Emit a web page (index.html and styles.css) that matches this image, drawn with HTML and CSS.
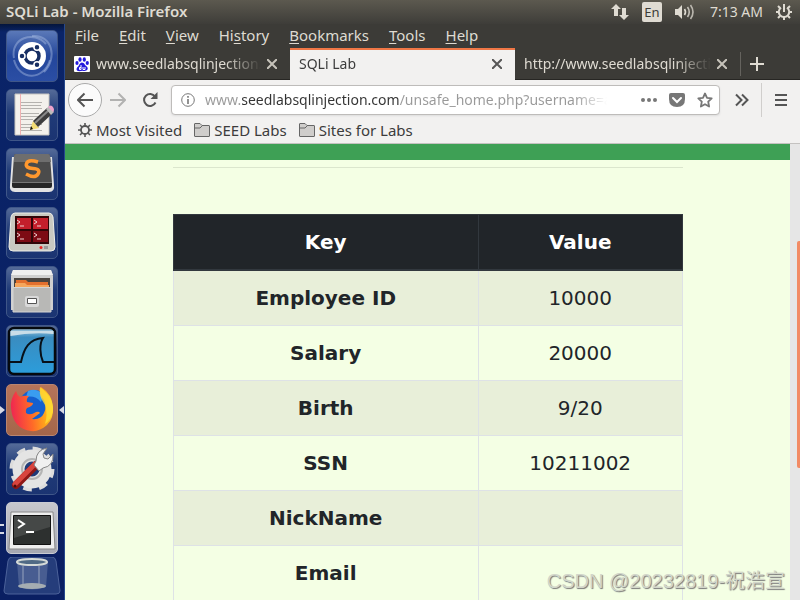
FILE: index.html
```html
<!DOCTYPE html>
<html lang="en">
<head>
<meta charset="utf-8">
<title>SQLi Lab</title>
<link rel="stylesheet" href="styles.css">
</head>
<body>
<header class="panel">
  <h1 class="panel-title">SQLi Lab - Mozilla Firefox</h1>
  <div class="indicators">
    <svg width="18" height="18" viewBox="0 0 18 18" fill="#dfdbd2"><path d="M5 1l5 5H7v7H3V6H0z"/><path d="M13 17l-5-5h3V5h4v7h3z"/></svg>
    <span class="lang">En</span>
    <svg width="20" height="18" viewBox="0 0 20 18" fill="none" stroke="#dfdbd2" stroke-width="1.6"><path d="M0 6h3l4-4v14l-4-4H0z" fill="#dfdbd2" stroke="none"/><path d="M9.500 6q2 3 0 6"/><path d="M12.500 4q3.500 5 0 10" opacity=".8"/><path d="M15.500 2q5 7 0 14" opacity=".75"/></svg>
    <time class="clock">7:13 AM</time>
    <svg width="16" height="16" viewBox="0 0 16 16" fill="none" stroke="#dfdbd2"><path d="M5 3.600a5.200 5.200 0 1 0 6 0" stroke-width="2"/><path d="M8 0v8" stroke-width="2"/><path d="M0 8h3M13 8h3M2 2l2 2M14 2l-2 2M2 14l2-2M14 14l-2-2M8 13v3" stroke-width="2"/></svg>
  </div>
</header>
<div class="desktop">
  <nav class="launcher" aria-label="Launcher">
    <button class="tile dash" aria-label="Dash"><svg viewBox="0 0 52 52"><g fill="none" stroke="#b9cbec" stroke-opacity=".4" stroke-width="2"><path d="M8 28C4 8 28 0 40 14"/><path d="M26 6c20-2 26 22 12 36"/><path d="M44 30C38 50 14 52 8 30"/></g><circle cx="26" cy="26" r="14" fill="#fff"/><circle cx="26" cy="26" r="7" fill="none" stroke="#172e62" stroke-width="3.500"/><g stroke="#fff" stroke-width="1.500" fill="#172e62"><circle cx="16" cy="26" r="3"/><circle cx="31" cy="17.300" r="3"/><circle cx="31" cy="34.700" r="3"/></g></svg></button>
    <button class="tile" aria-label="Text editor"><svg viewBox="0 0 52 52"><path d="M9 5h34v41H9z" fill="#f3f1ec" stroke="#c8c6c0"/><path d="M14.500 5v41" stroke="#efb1b1"/><path d="M15 13.500h21M15 16.500h20M15 19.500h21M15 24.500h18M15 27.500h21M15 30.500h12M15 35.500h21M15 38.500h18M15 41.500h21" stroke="#b4b2ae"/><path d="M24 41l3-9 6 7z" fill="#f2dc73"/><path d="M24 41l1-4 2 3z" fill="#111"/><path d="M27 32l14-13 5 6-14 13z" fill="#3d3d3d"/><path d="M29 34l14-13" stroke="#888" stroke-width="2"/><path d="M40 20l3-3 5 6-3 3z" fill="#bbb"/><path d="M42 18q3-3 5 0t0 5z" fill="#eda2cb"/></svg></button>
    <button class="tile" aria-label="Sublime Text"><svg viewBox="0 0 52 52"><path d="M6 9L4 37q-1 7 5 7h34q6 0 5-7L46 9z" fill="#e2e2e2"/><path d="M10 6h32q2 0 2 2l2 27H6L8 8q0-2 2-2z" fill="#4b4b4b"/><path d="M10 6h32q2 0 2 2l1 6H8V8q0-2 2-2z" fill="#6e6e6e"/><path d="M6 34h40v4q0 2-2 2H8q-2 0-2-2z" fill="#262626"/><path d="M6 34.500h40" stroke="#777"/><path d="M32 14Q22 11 20.500 15.500T27 20.500t5 5.500-12 0" fill="none" stroke="#ff982e" stroke-width="3.500"/></svg></button>
    <button class="tile" aria-label="Terminator"><svg viewBox="0 0 52 52"><path d="M9 6h34q3 0 4 4l2 30q0 4-4 4H7q-4 0-4-4l2-30q1-4 4-4z" fill="#c9c9c1" stroke="#eeeee8"/><path d="M9 9h34v28H9z" fill="#310608"/><path d="M11 11h14v11H11zM27 11h15v11H27z" fill="#c41f2b"/><path d="M11 24h14v11H11zM27 24h15v11H27z" fill="#7d0b14"/><path d="M11 13l3 2-3 2m3 2h4M28 13l3 2-3 2m3 2h4M11 26l3 2-3 2m3 2h4M28 26l3 2-3 2m3 2h4" fill="none" stroke="#eed2d2"/><circle cx="35" cy="40.500" r="1.500" fill="#e22"/><path d="M38 39h4v3h-4z" fill="#999"/></svg></button>
    <button class="tile" aria-label="Files"><svg viewBox="0 0 52 52"><path d="M7 4h38l2 6v34H5V10z" fill="#cfcfcf"/><path d="M7 4h38l2 5H5z" fill="#efefef"/><path d="M8 12h36v12H8z" fill="#4b4540"/><path d="M10 14h10l2 2h20v10H10z" fill="#e3702e"/><path d="M9 17h10l2 2h22v6H9z" fill="#f5a65c"/><path d="M7 21.500h38V46H7z" fill="#b8b8b6" stroke="#d4d4d4"/><rect x="19" y="30" width="14" height="11" rx="2" fill="#d9d9d9"/><path d="M21.500 32.500h9v5h-9z" fill="#fff" stroke="#555"/></svg></button>
    <button class="tile" aria-label="Wireshark"><svg viewBox="0 0 52 52"><defs><linearGradient id="sea" x2="0" y2="1"><stop offset="0" stop-color="#a9cbdf"/><stop offset=".2" stop-color="#3a8cc0"/><stop offset="1" stop-color="#2b9ddb"/></linearGradient></defs><rect x="3" y="3" width="46" height="46" rx="5" fill="url(#sea)" stroke="#05090e" stroke-width="2.500"/><path d="M4.500 6h43v3q-22-2-43 2z" fill="#c9dde8"/><path d="M4 37h11C18 23 23 14 37 13c-4 6-3 17 0 24h11" fill="none" stroke="#071018" stroke-width="2"/></svg></button>
    <button class="tile firefox running focused" aria-label="Firefox"><svg viewBox="0 0 52 52"><defs><linearGradient id="flame" x1="0" y1=".3" x2="1" y2=".2"><stop offset="0" stop-color="#f0294f"/><stop offset=".45" stop-color="#ff6a28"/><stop offset=".8" stop-color="#ffae1a"/><stop offset="1" stop-color="#ffd92e"/></linearGradient></defs><circle cx="28" cy="21" r="15" fill="#1560cf"/><path d="M22 7q10-4 15 5l-2 6q-6-7-15-5z" fill="#3a9df0"/><path d="M5 24Q4 15 10 7q1 4 4 6 4-2 9-1-3 3-2 6l6 1q0 3-6 5-2 2-1 5 4 3 10-1 3-1 4 1-4 3-8 6 9 1 12-6 3-6 0-13-6-7-3-13 11 7 12 20 1 11-6 18-8 7-16 6-18-2-20-23z" fill="url(#flame)"/><path d="M34 3q14 11 13 24-2 9-8 13 3-9 0-19-7-10-5-18z" fill="#ffdc35" opacity=".8"/></svg></button>
    <button class="tile" aria-label="System settings"><svg viewBox="0 0 52 52"><circle cx="26" cy="26" r="19" fill="none" stroke="#dcdcdc" stroke-width="7" stroke-dasharray="8 6.923"/><circle cx="26" cy="26" r="13.500" fill="none" stroke="#e4e4e4" stroke-width="12"/><circle cx="26" cy="26" r="10" fill="none" stroke="#b4b4b4" stroke-width="2"/><path d="M10 42l20-20" stroke="#8f1715" stroke-width="8" stroke-linecap="round"/><path d="M9 41l20-20" stroke="#d8443e" stroke-width="5" stroke-linecap="round"/><path d="M30 18q0-11 11-13l-4 6 1 4 4 1 5-5q1 12-10 14l-4 3-5-6z" fill="#f0f0f0" stroke="#858585"/><circle cx="9" cy="43" r="1.500" fill="#4b0a0a"/></svg></button>
    <button class="tile terminal running" aria-label="Terminal"><svg viewBox="0 0 52 52"><path d="M5 10h42l2 37H3z" fill="#eee" stroke="#888"/><path d="M7.500 13.500h37v29h-37z" fill="#2d302f" stroke="#111"/><path d="M8 14h36v11L8 36z" fill="#454847"/><path d="M12 18l6 4-6 4M20 30h8" fill="none" stroke="#fff" stroke-width="2"/></svg></button>
    <button class="trash" aria-label="Trash"><svg viewBox="0 0 58 38"><path d="M9 0h40q3 0 4 4l4 30q0 3-4 3H5q-4 0-4-3L5 4q1-4 4-4z" fill="#253d7b" stroke="#4c629a"/><path d="M14 5l2 25q13 5 27 0l2-25z" fill="#5a6f9c" opacity=".65"/><ellipse cx="29" cy="29" rx="14" ry="3" fill="#a5adb2"/><ellipse cx="29" cy="5" rx="15" ry="3" fill="#506a85" stroke="#d5dad7" stroke-width="2"/><path d="M20 9v18M36 9v18" stroke="#a9b4c8" opacity=".4" stroke-width="2"/></svg></button>
  </nav>
  <main class="browser">
    <nav class="menubar" aria-label="Menu bar">
      <button><u>F</u>ile</button><button><u>E</u>dit</button><button><u>V</u>iew</button><button>Hi<u>s</u>tory</button><button><u>B</u>ookmarks</button><button><u>T</u>ools</button><button><u>H</u>elp</button>
    </nav>
    <div class="tabs" role="tablist">
      <div class="tab">
        <svg class="favicon" viewBox="0 0 16 16"><rect width="16" height="16" rx="1" fill="#fff"/><g fill="#2319dc"><ellipse cx="3" cy="7" rx="1.600" ry="2"/><ellipse cx="6" cy="3.500" rx="1.600" ry="2.200"/><ellipse cx="10.300" cy="3.500" rx="1.600" ry="2.200"/><ellipse cx="13.300" cy="7" rx="1.600" ry="2"/><path d="M8 6.500q2 0 3.500 3 3 2 2 4t-5 1.300q-4 .8-5.500-.3-1.500-2 1.500-4.500 1.500-3.500 3.500-3.500z"/></g><path d="M7 9v4.500H5.500v-2H7M9 11v2.500h2V11" fill="none" stroke="#fff"/></svg>
        <button class="tab-label" role="tab">www.seedlabsqlinjection.com</button>
        <button class="close" aria-label="Close tab"><svg viewBox="0 0 10 10"><path d="M0 0l10 10M10 0L0 10"/></svg></button>
      </div>
      <div class="tab active">
        <button class="tab-label" role="tab" aria-selected="true">SQLi Lab</button>
        <button class="close" aria-label="Close tab"><svg viewBox="0 0 10 10"><path d="M0 0l10 10M10 0L0 10"/></svg></button>
      </div>
      <div class="tab">
        <button class="tab-label" role="tab">http://www.seedlabsqlinjection.com</button>
        <button class="close" aria-label="Close tab"><svg viewBox="0 0 10 10"><path d="M0 0l10 10M10 0L0 10"/></svg></button>
      </div>
      <button class="new-tab" aria-label="New tab"><svg viewBox="0 0 14 14"><path d="M7 0v14M0 7h14"/></svg></button>
    </div>
    <div class="toolbar">
      <button class="back" aria-label="Back"><svg width="16" height="16" viewBox="0 0 16 16"><path d="M16 8H1M7.500 1.500L1 8l6.500 6.500"/></svg></button>
      <button class="forward" aria-label="Forward"><svg width="16" height="16" viewBox="0 0 16 16"><path d="M0 8h15M8.500 1.500L15 8l-6.500 6.500"/></svg></button>
      <button class="reload" aria-label="Reload"><svg width="16" height="16" viewBox="0 0 16 16"><path d="M13.500 10.500a6 6 0 1 1-.5-6"/><path d="M15.500 0v7h-7z" fill="#555" stroke="none"/></svg></button>
      <div class="urlbar">
        <svg width="14" height="14" viewBox="0 0 14 14"><circle cx="7" cy="7" r="6.300" fill="none" stroke="#777"/><path d="M7 6v5M7 3v1.800" stroke="#777" stroke-width="1.600"/></svg>
        <input class="url" type="text" aria-label="Address" value="www.seedlabsqlinjection.com/unsafe_home.php?username=admin">
        <svg class="dots" width="16" height="4" viewBox="0 0 16 4" fill="#777"><circle cx="2" cy="2" r="2"/><circle cx="8" cy="2" r="2"/><circle cx="14" cy="2" r="2"/></svg>
        <svg width="16" height="14" viewBox="0 0 16 14"><path d="M2 0h12q2 0 2 2v4q0 8-8 8T0 6V2q0-2 2-2z" fill="#777"/><path d="M4 5l4 4 4-4" fill="none" stroke="#fff" stroke-width="2" stroke-linecap="round"/></svg>
        <svg width="16" height="16" viewBox="0 0 16 16"><path d="M8 1.500l2 4.300 4.700.6-3.500 3.300.9 4.800L8 12.200l-4.100 2.300.9-4.800-3.500-3.300 4.700-.6z" fill="none" stroke="#777" stroke-width="1.800" stroke-linejoin="round"/></svg>
      </div>
      <button class="overflow" aria-label="More tools"><svg width="14" height="14" viewBox="0 0 14 14"><path d="M1 1.500L6.500 7 1 12.500M7 1.500L12.500 7 7 12.500"/></svg></button>
      <button class="menu" aria-label="Open menu"><svg width="12" height="12" viewBox="0 0 12 12"><path d="M0 1h12M0 6h12M0 11h12"/></svg></button>
    </div>
    <nav class="bookmarks" aria-label="Bookmarks">
      <a href="#"><svg width="14" height="14" viewBox="0 0 14 14" fill="none" stroke="#555"><circle cx="7" cy="7" r="4" stroke-width="1.800"/><path d="M7 0v3M7 11v3M0 7h3M11 7h3M2 2l2 2M10 10l2 2M12 2l-2 2M4 10l-2 2" stroke-width="1.600"/></svg>Most Visited</a>
      <a href="#"><svg width="16" height="14" viewBox="0 0 16 14"><path d="M.5 13V1q0-.5.500-.5h5l2 2h7q.5 0 .5.500v10q0 .5-.5.500H1q-.5 0-.5-.5z" fill="#cfcdcb" stroke="#666"/><path d="M1 5h5l2-2" fill="none" stroke="#666"/></svg>SEED Labs</a>
      <a href="#"><svg width="16" height="14" viewBox="0 0 16 14"><path d="M.5 13V1q0-.5.500-.5h5l2 2h7q.5 0 .5.500v10q0 .5-.5.500H1q-.5 0-.5-.5z" fill="#cfcdcb" stroke="#666"/><path d="M1 5h5l2-2" fill="none" stroke="#666"/></svg>Sites for Labs</a>
    </nav>
    <div class="viewport">
      <section class="page">
        <div class="site-nav"></div>
        <div class="container">
          <hr>
          <table>
            <thead><tr><th scope="col">Key</th><th scope="col">Value</th></tr></thead>
            <tbody>
              <tr><th scope="row">Employee ID</th><td>10000</td></tr>
              <tr><th scope="row">Salary</th><td>20000</td></tr>
              <tr><th scope="row">Birth</th><td>9/20</td></tr>
              <tr><th scope="row">SSN</th><td>10211002</td></tr>
              <tr><th scope="row">NickName</th><td></td></tr>
              <tr><th scope="row">Email</th><td></td></tr>
            </tbody>
          </table>
        </div>
      </section>
      <div class="scrollbar"><div class="thumb"></div></div>
    </div>
  </main>
</div>
<p class="watermark">CSDN @20232819-祝浩宣</p>
</body>
</html>
```
FILE: styles.css
```css
* { box-sizing: border-box; }
body {
  margin: 0;
  height: 100vh;
  display: flex;
  flex-direction: column;
  overflow: hidden;
  position: relative;
  font: 14px/20px "Noto Sans", sans-serif;
  color: #3c3c3c;
}
button {
  margin: 0;
  padding: 0;
  border: 0;
  background: none;
  font: inherit;
  color: inherit;
}
svg { display: block; flex: none; }

.panel {
  flex: none;
  height: 24px;
  padding: 0 8px 2px 6px;
  display: flex;
  align-items: center;
  justify-content: space-between;
  background: linear-gradient(#5c594f, #3e3d39);
  color: #dfdbd2;
}
.panel-title { margin: 0; font-size: 15px; line-height: 20px; font-weight: 600; }
.indicators { display: flex; align-items: center; gap: 13px; padding-top: 2px; }
.clock { margin: 0 0 0 2px; }
.lang {
  width: 20px;
  border-radius: 2px;
  background: #dfdbd2;
  color: #3c3b37;
  font-size: 13px;
  text-align: center;
}

.desktop { flex: 1; min-height: 0; display: flex; }
.launcher {
  flex: none;
  width: 65px;
  padding-top: 6px;
  display: flex;
  flex-direction: column;
  align-items: center;
  gap: 7px;
  overflow: hidden;
  background: linear-gradient(#04153c, #0a2468 8px, #0a1f62);
  border-right: 1px solid #26488d;
}
.tile {
  position: relative;
  flex: none;
  width: 52px;
  height: 52px;
  border-radius: 5px;
  border: 1px solid #3f5688;
  background: linear-gradient(#546a98, #203b78 45%, #1b3472);
}
.tile svg { width: 52px; height: 52px; margin: -1px; }
.dash { background: linear-gradient(#5b79b8, #23469b 50%, #2b4ea4); }
.firefox { background: linear-gradient(#b6745a, #a4664a); border-color: #b98570; }
.terminal { background: linear-gradient(#c7c8cd, #a6a8b2); border-color: #c9cbd3; }
.running::before, .focused::after {
  content: "";
  position: absolute;
  top: 21px;
  border: 4px solid transparent;
}
.running::before { left: -7px; border-left: 5px solid #d5d9e5; border-right: 0; }
.focused::after { right: -7px; border-right: 5px solid #d5d9e5; border-left: 0; }
.terminal.running::before { height: 6px; width: 4px; border: solid #d5d9e5; border-width: 2px 0; }
.trash { flex: none; margin-top: -4px; width: 58px; }

.browser { flex: 1; min-width: 0; display: flex; flex-direction: column; background: #f2f1f0; }
.menubar {
  flex: none;
  height: 24px;
  padding: 0 10px 2px;
  display: flex;
  align-items: center;
  gap: 20px;
  background: #3c3b37;
  color: #dfdbd2;
  font-size: 15px;
}
.menubar u { text-underline-offset: 2px; text-decoration-thickness: 1px; }
.tabs {
  flex: none;
  height: 32px;
  display: flex;
  background: linear-gradient(#3c3b37 31px, #272623 31px);
  color: #dfdbd2;
}
.tab {
  flex: 0 1 225px;
  min-width: 0;
  padding: 0 13px 0 9px;
  display: flex;
  align-items: center;
  gap: 6px;
}
.tab.active {
  background: #f2f1f0;
  border-top: 2px solid #f07746;
  color: #3c3c3c;
  padding-bottom: 2px;
}
.favicon { width: 16px; height: 16px; }
.tab-label {
  flex: 1;
  min-width: 0;
  overflow: hidden;
  white-space: nowrap;
  text-align: left;
  mask-image: linear-gradient(to left, transparent, #000 36px);
}
.close svg { width: 10px; height: 10px; stroke: currentColor; stroke-width: 2; opacity: .85; }
.new-tab { margin: 4px 0; padding: 0 9px; border-left: 1px solid #65635e; }
.new-tab svg { width: 14px; height: 14px; stroke: #dfdbd2; stroke-width: 2; }

.toolbar {
  flex: none;
  height: 40px;
  padding: 0 13px 0 3px;
  display: flex;
  align-items: center;
}
.toolbar button svg { fill: none; stroke: #555; stroke-width: 2; }
.back {
  width: 34px;
  height: 34px;
  padding-left: 8px;
  border: 1px solid #aaa;
  border-radius: 50%;
  background: #fbfbfb;
}
.forward { margin-left: 8px; opacity: .4; }
.reload { margin: 0 13px 0 16px; }
.urlbar {
  flex: 1;
  min-width: 0;
  height: 30px;
  padding: 0 6px 0 9px;
  display: flex;
  align-items: center;
  gap: 12px;
  border: 1px solid #bebcba;
  border-radius: 4px;
  background: #fff;
  box-shadow: 0 1px 2px #ddd;
}
.url {
  flex: 1;
  min-width: 0;
  padding: 0;
  margin: 0 22px 0 -2px;
  border: 0;
  outline: 0;
  font: inherit;
  color: transparent;
  background: linear-gradient(90deg, #999 37px, #333 37px 195px, #999 195px 370px, transparent 402px);
  background-clip: text;
}
.overflow { margin: 0 12px 0 15px; }
.menu { height: 34px; padding-left: 13px; border-left: 1px solid #d0cecc; }

.bookmarks {
  flex: none;
  height: 24px;
  padding: 0 13px 4px;
  display: flex;
  align-items: center;
  gap: 12px;
  border-bottom: 1px solid #c4c2c0;
  font-size: 15px;
}
.bookmarks a { display: flex; align-items: center; gap: 4px; color: inherit; text-decoration: none; }

.viewport { flex: 1; min-height: 0; display: flex; }
.page {
  flex: 1;
  min-width: 0;
  overflow: hidden;
  background: #f4ffe4;
  color: #212529;
  font: 20px/30px "DejaVu Sans", sans-serif;
}
.site-nav { height: 16px; background: #3ea055; }
.container { max-width: 540px; margin: 0 auto; padding: 0 15px; }
hr { margin: 7px 0 46px; border: 0; border-top: 1px solid #dbe6cd; }
table { width: 100%; border-collapse: collapse; text-align: center; }
th, td { height: 55px; padding: 12px; border: 1px solid #dee2e6; }
th:first-child { width: 60%; }
thead th { background: #212529; border-color: #32383e; border-bottom-width: 2px; color: #fff; }
tbody tr:nth-child(odd) { background: #e8efd9; }
.scrollbar { flex: none; width: 10px; padding-top: 97px; background: #e6e6e6; }
.thumb { width: 3px; height: 227px; margin-left: auto; border-radius: 2px 0 0 2px; background: #f28b65; }

.watermark {
  position: absolute;
  right: 15px;
  bottom: 6px;
  margin: 0;
  font: 20px/26px "Liberation Sans", "Noto Sans CJK SC", sans-serif;
  color: #d2d6ca;
  text-shadow: 1px 1px 1px #777;
}
```
